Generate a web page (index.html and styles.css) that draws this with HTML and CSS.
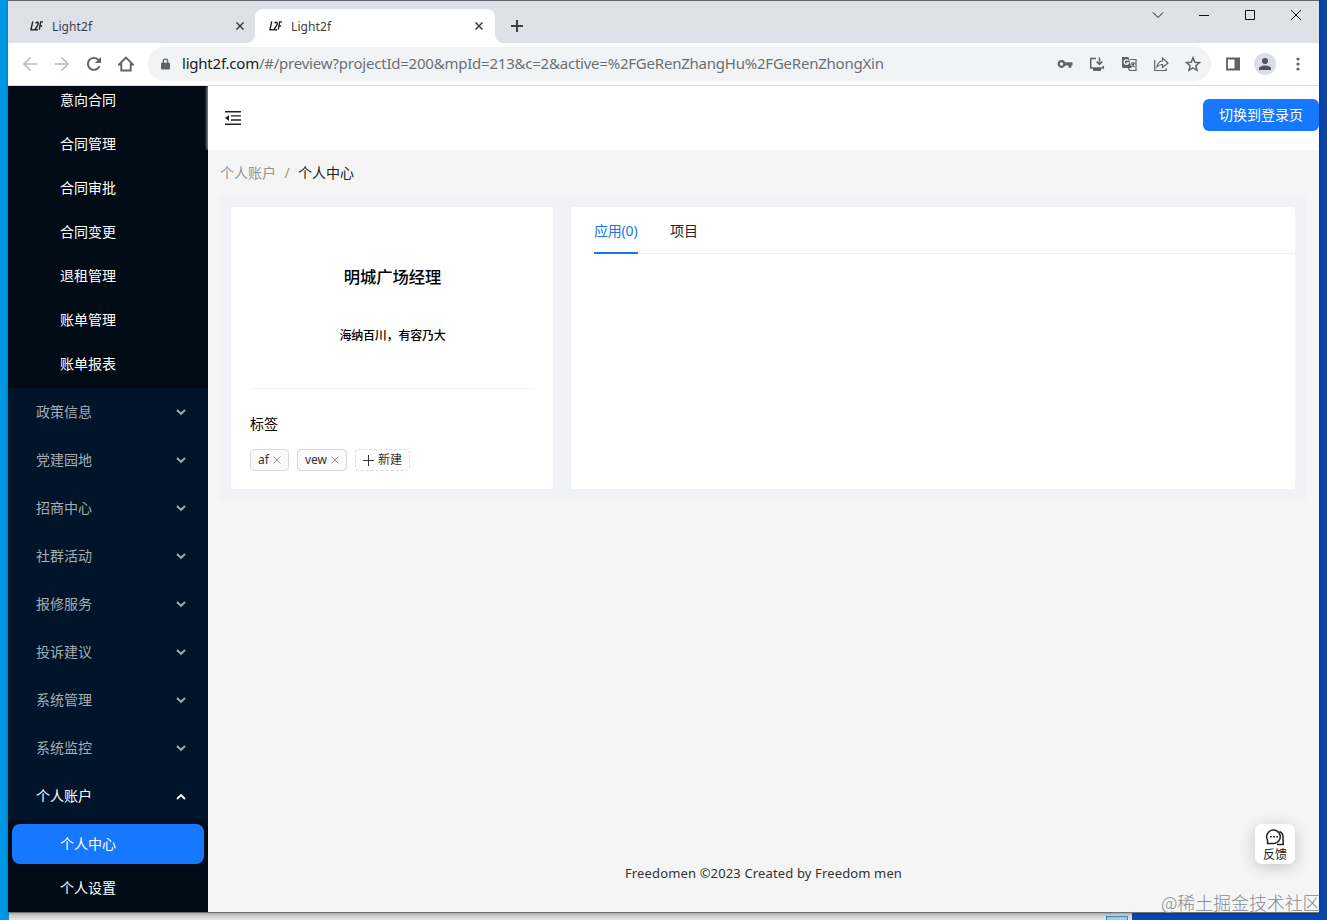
FILE: index.html
```html
<!DOCTYPE html>
<html lang="zh-CN">
<head>
<meta charset="utf-8">
<title>Light2f</title>
<link rel="stylesheet" href="styles.css">
</head>
<body>
<div class="taskwin"><span class="thumb"></span></div>
<div class="window">
  <div class="tabstrip">
    <div class="tab">
      <svg class="fav" viewBox="0 0 14 12"><path d="M3 1 1 10h3M6 3q2-2 3 0 0 2-4 7h3.500M10 10l1.500-8.500h3M10.500 6h2.500"/></svg>
      <span class="tab-title">Light2f</span>
      <svg class="close" viewBox="0 0 10 10"><path d="m1.500 1.500 7 7m0-7-7 7"/></svg>
    </div>
    <div class="tab active">
      <svg class="fav" viewBox="0 0 14 12"><path d="M3 1 1 10h3M6 3q2-2 3 0 0 2-4 7h3.500M10 10l1.500-8.500h3M10.500 6h2.500"/></svg>
      <span class="tab-title">Light2f</span>
      <svg class="close" viewBox="0 0 10 10"><path d="m1.500 1.500 7 7m0-7-7 7"/></svg>
    </div>
    <svg class="plus" viewBox="0 0 12 12"><path d="M6 0v12M0 6h12"/></svg>
    <div class="controls">
      <svg viewBox="0 0 12 12"><path d="m1 3.500 5 5 5-5"/></svg>
      <svg viewBox="0 0 12 12"><path d="M1 6.500h10"/></svg>
      <svg viewBox="0 0 12 12"><path d="M1.500 1.500h9v9h-9z"/></svg>
      <svg viewBox="0 0 12 12"><path d="m1 1 10 10m0-10L1 11"/></svg>
    </div>
  </div>
  <div class="toolbar">
    <svg class="nav dim" viewBox="0 0 16 16"><path d="M15 8H2m6.500-6.500L2 8l6.500 6.500"/></svg>
    <svg class="nav dim" viewBox="0 0 16 16"><path d="M1 8h13M7.500 1.500 14 8l-6.500 6.500"/></svg>
    <svg class="nav" viewBox="0 0 16 16"><path d="M13.500 10a6 6 0 1 1-1.200-6.200L14 5.500"/><path class="fill" d="M15 1v6H9z"/></svg>
    <svg class="nav" viewBox="0 0 16 16"><path d="M1 8.500 8 1.500l7 7h-2.300v6H3.300v-6z"/></svg>
    <div class="omnibox">
      <svg class="lock" viewBox="0 0 10 12"><path class="fill" d="M1 4.500h8q1 0 1 1V11q0 1-1 1H1q-1 0-1-1V5.500q0-1 1-1"/><path d="M2.600 5V3a2.400 2.400 0 0 1 4.800 0v2"/></svg>
      <span class="url"><b>light2f.com</b>/#/preview?projectId=200&amp;mpId=213&amp;c=2&amp;active=%2FGeRenZhangHu%2FGeRenZhongXin</span>
      <div class="actions">
        <svg viewBox="0 0 16 16"><path class="fill" fill-rule="evenodd" d="M8.200 6.300H15.500v3.200h-1.200v2.300h-2.800V9.500H8.200a4 4 0 1 1 0-3.200M4.500 6.300a1.700 1.700 0 1 0 0 3.400 1.700 1.700 0 0 0 0-3.400"/></svg>
        <svg viewBox="0 0 16 16"><path d="M7 2.500H1.700V12h12.600v-2M10.500 1.500V8M7.500 5.500l3 3 3-3"/><path class="fill" d="M4 12h8v3H4z"/></svg>
        <svg viewBox="0 0 16 16"><path class="fill" d="M1 1h6.500l3 11H2L1 11z"/><path class="thin" d="M9 3.500h6v11H8.500l-1-3M10 7h4m-2-1v1m1.500 0q-1 3-3.500 4m.5-3 3 3"/><path class="white" d="M7.300 4.700a2.300 2.300 0 1 0 .3 2.200H5.500"/></svg>
        <svg viewBox="0 0 16 16"><path class="thin" d="M1.700 4v10.500h11.500V12M4 11q.5-5.500 5.500-6V2l5.500 5-5.500 4.500V8.500Q6 8.300 4 11z"/></svg>
        <svg viewBox="0 0 16 16"><path class="star" d="m8 1.800 1.800 4.400 4.700.4-3.600 3.100 1.100 4.600L8 11.900l-4 2.400 1.100-4.600-3.600-3.100 4.700-.4z"/></svg>
      </div>
    </div>
    <svg class="panel" viewBox="0 0 16 16"><path d="M2 2.500h12v11H2z"/><path class="fill" d="M9.500 2H15v12H9.500z"/></svg>
    <div class="avatar"><svg viewBox="0 0 14 14"><circle cx="7" cy="4" r="3"/><path d="M1 13v-2q1-2.500 6-2.500t6 2.500v2z"/></svg></div>
    <svg class="dots" viewBox="0 0 4 14"><circle cx="2" cy="2" r="1.600"/><circle cx="2" cy="7" r="1.600"/><circle cx="2" cy="12" r="1.600"/></svg>
  </div>
  <div class="page">
    <aside class="side">
      <ul class="sub first">
        <li>意向合同</li><li>合同管理</li><li>合同审批</li><li>合同变更</li><li>退租管理</li><li>账单管理</li><li>账单报表</li>
      </ul>
      <ul class="menu">
        <li>政策信息<svg viewBox="0 0 10 7"><path d="m1 1 4 4 4-4"/></svg></li>
        <li>党建园地<svg viewBox="0 0 10 7"><path d="m1 1 4 4 4-4"/></svg></li>
        <li>招商中心<svg viewBox="0 0 10 7"><path d="m1 1 4 4 4-4"/></svg></li>
        <li>社群活动<svg viewBox="0 0 10 7"><path d="m1 1 4 4 4-4"/></svg></li>
        <li>报修服务<svg viewBox="0 0 10 7"><path d="m1 1 4 4 4-4"/></svg></li>
        <li>投诉建议<svg viewBox="0 0 10 7"><path d="m1 1 4 4 4-4"/></svg></li>
        <li>系统管理<svg viewBox="0 0 10 7"><path d="m1 1 4 4 4-4"/></svg></li>
        <li>系统监控<svg viewBox="0 0 10 7"><path d="m1 1 4 4 4-4"/></svg></li>
        <li class="open">个人账户<svg viewBox="0 0 10 7"><path d="m1 6 4-4 4 4"/></svg></li>
      </ul>
      <ul class="sub last"><li class="selected">个人中心</li><li>个人设置</li></ul>
    </aside>
    <main class="main">
      <header class="header">
        <svg class="fold" viewBox="0 0 16 14"><path d="M0 .8h16M6 4.900h10M6 9h10M0 13.200h16"/><path class="fill" d="M0 7l4-3v6z"/></svg>
        <button class="login">切换到登录页</button>
      </header>
      <nav class="crumbs"><span>个人账户</span><i>/</i><strong>个人中心</strong></nav>
      <section class="content">
        <div class="card profile">
          <h2>明城广场经理</h2>
          <p class="motto">海纳百川，有容乃大</p>
          <div class="tags-title">标签</div>
          <div class="tags">
            <span class="tag af">af<svg viewBox="0 0 8 8"><path d="m.5.5 7 7m0-7-7 7"/></svg></span>
            <span class="tag vew">vew<svg viewBox="0 0 8 8"><path d="m.5.5 7 7m0-7-7 7"/></svg></span>
            <span class="tag new"><svg viewBox="0 0 11 11"><path d="M5.500 0v11M0 5.500h11"/></svg>新建</span>
          </div>
        </div>
        <div class="card apps">
          <div class="tabs"><span class="on">应用(0)</span><span>项目</span></div>
        </div>
      </section>
      <footer class="footer">Freedomen ©2023 Created by Freedom men</footer>
    </main>
  </div>
</div>
<div class="feedback">
  <svg viewBox="0 0 20 18"><path d="M2.500 15.500V12A6.800 6.800 0 1 1 9 15.500z"/><path d="M14.500 3.500q4 2 3.500 6.500l.3 6.500H12"/><path class="fill" d="M5 8h1.700v1.600H5zm3.200 0h1.700v1.600H8.200zm3.200 0h1.700v1.600h-1.700z"/></svg>
  反馈
</div>
<div class="watermark">@稀土掘金技术社区</div>
</body>
</html>
```

FILE: styles.css
```css
* { box-sizing: border-box; }
body {
  margin: 0; width: 1327px; height: 920px; overflow: hidden; position: relative;
  padding: 0 8px; font: 14px/22px "Noto Sans", "Noto Sans CJK SC", sans-serif;
  background: linear-gradient(90deg, #0098e4 0 8px, #0646ae 100px);
}
ul { list-style: none; margin: 0; padding: 0; }
svg { display: block; flex: none; fill: none; stroke: currentColor; stroke-width: 1.500; }
svg .fill { fill: currentColor; stroke: none; }
svg .thin { stroke-width: 1.200; }
svg .white { stroke: #fff; stroke-width: 1.200; }
.taskwin {
  position: absolute; left: 9px; top: 912px; width: 1123px; height: 8px;
  background: linear-gradient(#bdbdbd, #e5e5e5); display: flex; justify-content: flex-end; padding: 4px 4px 0;
}
.thumb { width: 22px; height: 8px; background: #9dcbe2; border: 1px solid #328bbb; }
.window {
  position: relative; width: 1311px; height: 913px; display: flex; flex-direction: column;
  border-top: 1px solid #65656e; border-bottom: 1px solid #6d7371;
  box-shadow: 0 0 3px #0005;
}
.tabstrip { height: 42px; background: #dee1e7; display: flex; padding-top: 8px; color: #3c4043; }
.tab { width: 247px; height: 34px; display: flex; align-items: center; padding: 0 10px 0 22px; border-radius: 8px 8px 0 0; position: relative; }
.tab.active { width: 240px; background: #fff; padding: 0 11px 0 14px; }
.tab.active::before, .tab.active::after {
  content: ""; position: absolute; bottom: 0; width: 8px; height: 8px;
}
.tab.active::before { left: -8px; background: radial-gradient(circle at 0 0, #dee1e7 7.500px, #fff 8px); }
.tab.active::after { right: -8px; background: radial-gradient(circle at 100% 0, #dee1e7 7.500px, #fff 8px); }
.fav { width: 13px; height: 12px; color: #222; }
.tab-title { flex: 1; margin-left: 9px; padding-top: 2px; font-size: 12px; letter-spacing: .1px; }
.close { width: 10px; height: 10px; }
.plus { width: 12px; height: 12px; margin: 11px 0 0 16px; stroke-width: 2; }
.controls { margin-left: auto; padding: 0 17px 0 0; display: flex; gap: 34px; color: #111; }
.controls svg { width: 12px; height: 12px; stroke-width: 1; }
.toolbar { height: 43px; background: #fff; border-bottom: 1px solid #d9dbdd; display: flex; align-items: center; padding-left: 14px; color: #5f6368; }
.nav { width: 16px; height: 16px; margin-right: 16px; stroke-width: 1.900; }
.nav.dim { color: #b6b9bd; stroke-width: 1.600; }
.omnibox { width: 1063px; height: 34px; margin-left: -2px; border-radius: 17px; background: #f1f3f4; display: flex; align-items: center; padding: 0 10px 0 13px; }
.lock { width: 9px; height: 12px; margin-right: 12px; }
.url { font-size: 15px; white-space: nowrap; color: #6c7074; width: 704px; letter-spacing: -.225px; padding-bottom: 2px; }
.url b { font-weight: 400; color: #202124; }
.actions { margin-left: auto; display: flex; gap: 16px; }
.actions svg, .panel { width: 16px; height: 16px; }
.panel { margin-left: 14px; stroke-width: 1.800; }
.avatar { width: 22px; height: 22px; margin-left: 13px; border-radius: 50%; background: #dadde4; display: grid; place-items: center; }
.avatar svg { width: 14px; height: 14px; fill: #50545b; stroke: none; }
.dots { width: 4px; height: 14px; margin-left: 20px; fill: currentColor; stroke: none; }
.page { flex: 1; min-height: 0; display: flex; background: #f5f5f5; }
.side { flex: none; width: 200px; height: 826px; background: #001529; overflow: hidden; color: #fff; }
.sub { background: #000b16; padding: 0 4px; }
.sub li { height: 40px; line-height: 40px; padding-left: 48px; border-radius: 8px; margin-bottom: 4px; }
.sub.first { height: 302px; display: flow-root; }
.sub.first li:first-child { margin-top: -6px; }
.menu { padding: 4px 4px 0; }
.menu li { height: 40px; margin-bottom: 8px; padding: 0 18px 0 24px; display: flex; align-items: center; justify-content: space-between; color: #a6adb4; }
.menu li:last-child { margin-bottom: 4px; }
.menu li.open { color: #fff; }
.menu svg { width: 10px; height: 7px; stroke-width: 1.900; }
.sub.last { height: 100px; padding-top: 4px; box-shadow: inset 0 4px 3px #001020; }
.selected { background: #1677ff; }
.main { flex: 1; min-width: 0; display: flex; flex-direction: column; }
.header { height: 64px; background: #fff; display: flex; justify-content: space-between; padding: 13px 0 0 17px; box-shadow: -1px 0 3px #aab; clip-path: inset(0 0 0 -3px); }
.fold { width: 16px; height: 14px; margin-top: 12px; color: #222; stroke-width: 1.400; }
.login { width: 116px; height: 32px; border: 0; border-radius: 6px; background: #1677ff; color: #fff; font: inherit; padding: 0; }
.crumbs { height: 46px; padding: 12px 12px 0; color: #949494; display: flex; }
.crumbs i { width: 22px; text-align: center; font-style: normal; }
.crumbs strong { font-weight: 400; color: #222; }
.content { height: 304px; margin: 0 13px 0 12px; padding: 11px; background: #f0f2f5; display: flex; gap: 18px; box-shadow: 0 0 4px #f0f2f5; }
.card { background: #fff; height: 282px; border-radius: 2px; }
.profile { width: 322px; padding: 0 18px 0 19px; color: #000; }
.profile h2 { margin: 0; padding-top: 56px; font-size: 16.300px; line-height: 28px; font-weight: 500; text-align: center; }
.motto { margin: 0; height: 98px; padding-top: 35px; font-size: 12px; line-height: 20px; font-weight: 500; text-align: center; border-bottom: 1px solid #f0f0f0; letter-spacing: -.2px; }
.tags-title { margin-top: 24px; line-height: 22px; }
.tags { display: flex; gap: 8px; margin-top: 14px; }
.tag { height: 22px; border: 1px solid #d9d9d9; border-radius: 4px; background: #fafafa; font-size: 12px; line-height: 20px; display: flex; align-items: center; padding: 0 7px; color: #333; justify-content: space-between; }
.tag svg { width: 8px; height: 8px; color: #999; stroke-width: 1; }
.tag.af { width: 39px; }
.tag.vew { width: 50px; }
.tag.new { width: 55px; background: #fff; border-style: dashed; }
.tag.new svg { width: 11px; height: 11px; color: #333; }
.apps { flex: 1; padding-left: 23px; }
.tabs { height: 47px; border-bottom: 1px solid #f0f0f0; display: flex; gap: 32px; color: #222; line-height: 48px; }
.tabs .on { color: #1677e8; border-bottom: 2px solid #1677e8; height: 47px; width: 44px; white-space: nowrap; letter-spacing: -.2px; }
.footer { margin-top: auto; height: 50px; text-align: center; font-size: 13px; letter-spacing: .14px; color: #333; }
.feedback { position: absolute; left: 1255px; top: 824px; width: 40px; height: 40px; background: #fff; border-radius: 7px; box-shadow: 0 3px 16px #0003; display: flex; flex-direction: column; align-items: center; padding-top: 4px; font-size: 12px; line-height: 18px; color: #222; }
.feedback svg { width: 20px; height: 18px; }
.watermark { position: absolute; left: 1161px; top: 889px; font: 18px/27px "Noto Sans CJK SC", sans-serif; font-weight: 300; color: #888b91; white-space: nowrap; letter-spacing: -.1px; }
```
